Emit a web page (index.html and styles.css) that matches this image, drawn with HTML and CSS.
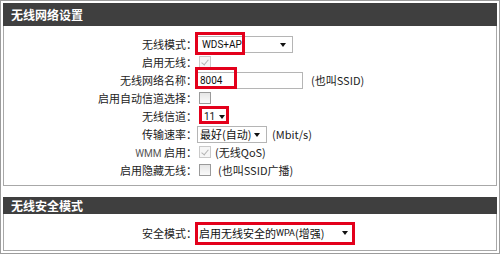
FILE: index.html
```html
<!DOCTYPE html>
<html lang="zh-CN">
<head>
    <meta charset="UTF-8">
    <title>无线网络设置</title>
    <link rel="stylesheet" href="styles.css">
</head>
<body>
    <div class="frame">
        <section class="panel">
            <h2 class="panel-title">无线网络设置</h2>
            <div class="panel-body">
                <div class="row">
                    <span class="label">无线模式：</span>
                    <div class="field">
                        <span class="select select-mode">WDS+AP</span>
                        <span class="mark mark-mode"></span>
                    </div>
                </div>
                <div class="row">
                    <span class="label">启用无线：</span>
                    <div class="field">
                        <span class="check checked disabled"></span>
                    </div>
                </div>
                <div class="row">
                    <span class="label">无线网络名称：</span>
                    <div class="field">
                        <span class="input input-ssid">8004</span>
                        <span class="note note-ssid">(也叫SSID)</span>
                        <span class="mark mark-ssid"></span>
                    </div>
                </div>
                <div class="row">
                    <span class="label">启用自动信道选择：</span>
                    <div class="field">
                        <span class="check"></span>
                    </div>
                </div>
                <div class="row">
                    <span class="label">无线信道：</span>
                    <div class="field">
                        <span class="select select-channel">11</span>
                        <span class="mark mark-channel"></span>
                    </div>
                </div>
                <div class="row">
                    <span class="label">传输速率：</span>
                    <div class="field">
                        <span class="select select-rate">最好(自动)</span>
                        <span class="note note-rate">(Mbit/s)</span>
                    </div>
                </div>
                <div class="row">
                    <span class="label"><span class="latin">WMM</span> 启用：</span>
                    <div class="field">
                        <span class="check checked disabled"></span>
                        <span class="note note-qos">(无线QoS)</span>
                    </div>
                </div>
                <div class="row">
                    <span class="label">启用隐藏无线：</span>
                    <div class="field">
                        <span class="check"></span>
                        <span class="note note-hide">(也叫SSID广播)</span>
                    </div>
                </div>
            </div>
        </section>

        <section class="panel panel-security">
            <h2 class="panel-title">无线安全模式</h2>
            <div class="panel-body">
                <div class="row">
                    <span class="label">安全模式：</span>
                    <div class="field">
                        <span class="select select-security">启用无线安全的<span class="small">WPA</span>(增强)</span>
                        <span class="mark mark-security"></span>
                    </div>
                </div>
            </div>
        </section>
    </div>
</body>
</html>
```

FILE: styles.css
```css
* {
    margin: 0;
    padding: 0;
    box-sizing: border-box;
}

body {
    font-family: "Noto Sans CJK SC", "Noto Sans", sans-serif;
    font-size: 11px;
    color: #222;
    background: #fff;
}

.frame {
    width: 500px;
    height: 254px;
    border: 1px solid #9c9c9c;
    padding: 2px;
}

.panel {
    border: 1px solid #a8a8a8;
    border-top: none;
}

.panel-security {
    margin-top: 11px;
}

.panel-title {
    height: 23px;
    line-height: 23px;
    padding-left: 8px;
    margin: 0 -1px;
    background: #3f3f3f;
    color: #fff;
    font-size: 12px;
    font-weight: bold;
}

.panel-security .panel-title {
    height: 17px;
    line-height: 17px;
}

.panel-body {
    padding: 9px 0 6px;
}

.panel-security .panel-body {
    padding: 10px 0 8px;
}

.row {
    display: grid;
    grid-template-columns: 193px auto;
    align-items: center;
    height: 18px;
}

.label {
    text-align: right;
    white-space: nowrap;
}

.latin {
    font-family: Roboto, sans-serif;
    font-size: 10px;
    color: #555;
}

.field {
    position: relative;
    display: flex;
    align-items: center;
    height: 18px;
}

.select,
.input {
    position: relative;
    display: flex;
    align-items: center;
    height: 17px;
    padding-left: 4px;
    background: #fff;
    border: 1px solid #b5b5b5;
    font-family: Roboto, "Noto Sans CJK SC", sans-serif;
    font-size: 10px;
    color: #111;
    white-space: nowrap;
}

.select-rate,
.select-security {
    font-family: "Noto Sans CJK SC", sans-serif;
    font-size: 11px;
    padding-left: 2px;
}

.small {
    font-family: Roboto, sans-serif;
    font-size: 9px;
}

.select::after {
    content: "";
    position: absolute;
    right: 6px;
    top: 6px;
    border-left: 3px solid transparent;
    border-right: 3px solid transparent;
    border-top: 4px solid #111;
}

.select-mode {
    width: 96px;
}

.input-ssid {
    width: 106px;
    padding-left: 2px;
}

.select-channel {
    width: 28px;
    margin-left: 4px;
    height: 13px;
    padding-left: 3px;
    border: none;
}

.select-channel::after {
    right: 4px;
    top: 5px;
}

.select-rate {
    width: 70px;
}

.select-security {
    width: 157px;
    border: none;
}

.note {
    white-space: nowrap;
    color: #222;
}

.note-ssid {
    margin-left: 8px;
}

.note-rate {
    margin-left: 5px;
}

.note-qos {
    margin-left: 4px;
}

.note-hide {
    margin-left: 7px;
}

.check {
    position: relative;
    width: 12px;
    height: 12px;
    margin-left: 2px;
    border: 1px solid #9a9a9a;
    background: linear-gradient(#e6e6e6, #fafafa);
}

.check.disabled {
    border-color: #c9c9c9;
    background: #f6f6f6;
}

.check.checked::after {
    content: "";
    position: absolute;
    left: 3px;
    top: 1px;
    width: 3px;
    height: 6px;
    border-right: 1px solid #b4b4b4;
    border-bottom: 1px solid #b4b4b4;
    transform: rotate(40deg);
}

.mark {
    position: absolute;
    border: 3px solid #e3001b;
    pointer-events: none;
}

.mark-mode {
    left: -2px;
    top: -3px;
    width: 50px;
    height: 23px;
}

.mark-ssid {
    left: -2px;
    top: -4px;
    width: 42px;
    height: 22px;
}

.mark-channel {
    left: 2px;
    top: -1px;
    width: 30px;
    height: 18px;
}

.mark-security {
    left: -2px;
    top: -2px;
    width: 160px;
    height: 23px;
}
```
